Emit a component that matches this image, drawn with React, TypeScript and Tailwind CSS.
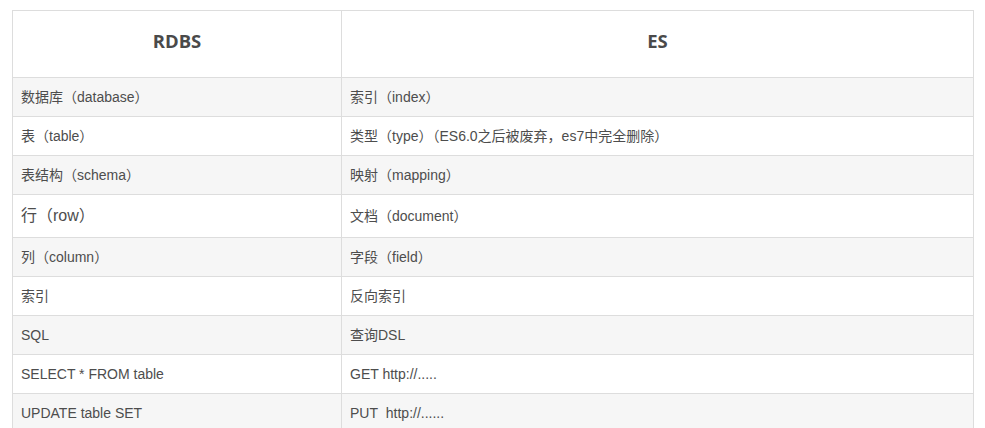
import React from "react";

const rows: [string, string, boolean?][] = [
  ["数据库（database）", "索引（index）"],
  ["表（table）", "类型（type）（ES6.0之后被废弃，es7中完全删除）"],
  ["表结构（schema）", "映射（mapping）"],
  ["行（row）", "文档（document）", true],
  ["列（column）", "字段（field）"],
  ["索引", "反向索引"],
  ["SQL", "查询DSL"],
  ["SELECT * FROM table", "GET http://....."],
  ["UPDATE table SET", "PUT\u00a0\u00a0http://......"],
];

export default function App() {
  return (
    <div className="w-[985px] h-[428px] overflow-hidden bg-white pl-[12px] pt-[10px]">
      <table
        className="w-[962px] border-collapse text-[#4d4d4d]"
        style={{ fontFamily: '"Liberation Sans", "Noto Sans CJK SC", sans-serif' }}
      >
        <thead>
          <tr>
            <th
              className="w-[329px] h-[67px] border border-[#dddddd] text-center text-[18.5px] font-bold text-[#4a4a4a] align-middle pb-[7px]"
              style={{ fontFamily: '"Open Sans", "Noto Sans CJK SC", sans-serif' }}
            >
              RDBS
            </th>
            <th
              className="h-[67px] border border-[#dddddd] text-center text-[18.5px] font-bold text-[#4a4a4a] align-middle pb-[7px]"
              style={{ fontFamily: '"Open Sans", "Noto Sans CJK SC", sans-serif' }}
            >
              ES
            </th>
          </tr>
        </thead>
        <tbody>
          {rows.map(([a, b, big], i) => (
            <tr key={i} className={i % 2 === 0 ? "bg-[#f6f6f6]" : "bg-white"}>
              <td
                className={
                  big
                    ? "border border-[#dddddd] px-[8px] h-[43px] text-[16px] leading-[26px] align-middle"
                    : "border border-[#dddddd] px-[8px] h-[39px] text-[14px] leading-[22px] align-middle"
                }
              >
                {a}
              </td>
              <td className={
                  big
                    ? "border border-[#dddddd] px-[8px] h-[43px] text-[14px] leading-[22px] align-middle"
                    : "border border-[#dddddd] px-[8px] h-[39px] text-[14px] leading-[22px] align-middle"
                }>{b}</td>
            </tr>
          ))}
        </tbody>
      </table>
    </div>
  );
}
